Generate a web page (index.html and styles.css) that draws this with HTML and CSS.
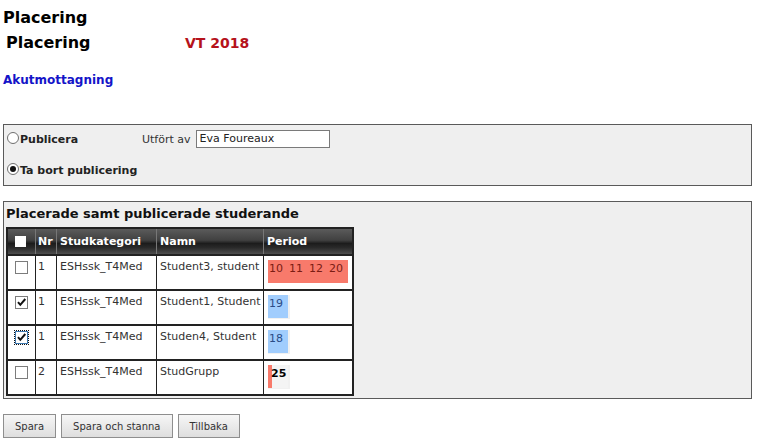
FILE: index.html
```html
<!DOCTYPE html>
<html lang="sv">
<head>
<meta charset="utf-8">
<title>Placering</title>
<link rel="stylesheet" href="styles.css">
</head>
<body>
<div class="page">
  <div class="page-title">Placering</div>
  <div class="head-row">
    <span class="head-title">Placering</span>
    <span class="term">VT 2018</span>
  </div>
  <div class="unit">Akutmottagning</div>

  <div class="panel publish">
    <div class="pub-row">
      <span class="pub-cell">
        <span class="radio"></span><span class="pub-label">Publicera</span>
      </span>
      <span class="by-label">Utfört av</span>
      <span class="text-input">Eva Foureaux</span>
    </div>
    <div class="pub-row second">
      <span class="pub-cell">
        <span class="radio checked"></span><span class="pub-label">Ta bort publicering</span>
      </span>
    </div>
  </div>

  <div class="panel list">
    <div class="list-title">Placerade samt publicerade studerande</div>
    <table class="grid">
      <thead>
        <tr>
          <th class="c-check"><span class="head-box"></span></th>
          <th class="c-nr">Nr</th>
          <th class="c-cat">Studkategori</th>
          <th class="c-name">Namn</th>
          <th class="c-period">Period</th>
        </tr>
      </thead>
      <tbody>
        <tr>
          <td class="c-check"><span class="cbox"></span></td>
          <td class="c-nr">1</td>
          <td class="c-cat">ESHssk_T4Med</td>
          <td class="c-name">Student3, student</td>
          <td class="c-period"><span class="periods"><span class="p red">10</span><span class="p red">11</span><span class="p red">12</span><span class="p red">20</span></span></td>
        </tr>
        <tr>
          <td class="c-check"><span class="cbox checked"><svg viewBox="0 0 11 11" width="11" height="11"><path d="M2 5.2 L4.3 7.8 L9.3 2" fill="none" stroke="#111" stroke-width="2"/></svg></span></td>
          <td class="c-nr">1</td>
          <td class="c-cat">ESHssk_T4Med</td>
          <td class="c-name">Student1, Student</td>
          <td class="c-period"><span class="periods framed"><span class="p blue">19</span></span></td>
        </tr>
        <tr>
          <td class="c-check"><span class="cbox checked focus"><svg viewBox="0 0 11 11" width="11" height="11"><path d="M2 5.2 L4.3 7.8 L9.3 2" fill="none" stroke="#111" stroke-width="2"/></svg></span></td>
          <td class="c-nr">1</td>
          <td class="c-cat">ESHssk_T4Med</td>
          <td class="c-name">Studen4, Student</td>
          <td class="c-period"><span class="periods framed"><span class="p blue">18</span></span></td>
        </tr>
        <tr>
          <td class="c-check"><span class="cbox"></span></td>
          <td class="c-nr">2</td>
          <td class="c-cat">ESHssk_T4Med</td>
          <td class="c-name">StudGrupp</td>
          <td class="c-period"><span class="periods framed"><span class="p partial">25</span></span></td>
        </tr>
      </tbody>
    </table>
  </div>

  <div class="buttons">
    <button class="btn">Spara</button>
    <button class="btn">Spara och stanna</button>
    <button class="btn">Tillbaka</button>
  </div>
</div>
</body>
</html>
```

FILE: styles.css
```css
html, body {
  margin: 0;
  padding: 0;
  background: #ffffff;
}

body {
  font-family: Verdana, "DejaVu Sans", sans-serif;
  font-size: 11px;
  color: #222;
}

.page {
  padding: 0 10px 0 3px;
}

.page-title {
  margin-top: 8px;
  font-size: 16px;
  line-height: 20px;
  font-weight: bold;
  color: #000;
}

.head-row {
  display: flex;
  align-items: baseline;
  margin-top: 5px;
  padding-left: 3px;
  line-height: 20px;
}

.head-title {
  width: 179px;
  font-size: 16px;
  font-weight: bold;
  color: #000;
}

.term {
  font-size: 14px;
  font-weight: bold;
  color: #b5121b;
}

.unit {
  margin-top: 20px;
  font-size: 12px;
  line-height: 15px;
  font-weight: bold;
  color: #1414c8;
}

.panel {
  border: 1px solid #5a5a5a;
  background: #efefef;
}

.publish {
  margin-top: 36px;
  padding: 4px 0 5px 3px;
}

.pub-row {
  display: flex;
  align-items: center;
  height: 20px;
}

.pub-row.second {
  margin-top: 11px;
}

.pub-cell {
  display: flex;
  align-items: center;
  width: 135px;
}

.radio {
  width: 10px;
  height: 10px;
  border: 1px solid #6f6f6f;
  border-radius: 50%;
  background: #fff;
  margin-right: 1px;
  margin-bottom: 3px;
  display: inline-flex;
  align-items: center;
  justify-content: center;
  flex: none;
}

.radio.checked::after {
  content: "";
  width: 6px;
  height: 6px;
  border-radius: 50%;
  background: #111;
}

.pub-label {
  font-weight: bold;
  color: #222;
}

.by-label {
  color: #333;
  margin-right: 5px;
}

.text-input {
  box-sizing: border-box;
  width: 134px;
  height: 18px;
  border: 1px solid #7a7a7a;
  background: #fff;
  padding-left: 3px;
  line-height: 16px;
  color: #222;
}

.list {
  margin-top: 15px;
  padding: 4px 2px 2px 2px;
}

.list-title {
  font-size: 13px;
  line-height: 16px;
  font-weight: bold;
  color: #111;
  margin-bottom: 5px;
}

.grid {
  border-collapse: separate;
  border-spacing: 0;
  border: 2px solid #222;
  background: #fff;
}

.grid th {
  height: 25px;
  padding: 0;
  text-align: left;
  vertical-align: middle;
  color: #fff;
  font-weight: bold;
  font-size: 11px;
  line-height: 13px;
  background: linear-gradient(#5b5b5b 0%, #404040 45%, #1c1c1c 58%, #2a2a2a 75%, #4e4e4e 100%);
  border-left: 1px solid #777;
}

.grid td {
  height: 33px;
  padding: 0;
  vertical-align: top;
  line-height: 13px;
  color: #333;
  border-top: 2px solid #222;
  border-left: 1px solid #222;
}

.grid th:first-child,
.grid td:first-child {
  border-left: none;
}

.c-check { width: 27px; }
.c-nr { width: 20px; }
.c-cat { width: 99px; }
.c-name { width: 106px; }
.c-period { width: 88px; }

.grid th.c-nr, .grid td.c-nr { padding-left: 2px; width: 18px; }
.grid th.c-cat, .grid td.c-cat { padding-left: 3px; width: 96px; }
.grid th.c-name, .grid td.c-name { padding-left: 3px; width: 103px; }
.grid th.c-period { padding-left: 3px; width: 85px; }
.grid td.c-period { padding-left: 4px; width: 84px; }

.grid td.c-nr,
.grid td.c-cat,
.grid td.c-name {
  padding-top: 4px;
  height: 29px;
}

.head-box {
  display: block;
  width: 11px;
  height: 11px;
  background: #fff;
  margin-left: 7px;
}

.cbox {
  display: flex;
  align-items: center;
  justify-content: center;
  box-sizing: border-box;
  width: 13px;
  height: 13px;
  border: 1px solid #7c7c7c;
  background: #fff;
  margin: 5px 0 0 7px;
}

.cbox.focus {
  border-color: #3d78b0;
  outline: 1px dotted #111;
  outline-offset: 0;
}

.grid td.c-period {
  padding-top: 4px;
  height: 29px;
}

.periods {
  display: inline-flex;
}

.periods.framed {
  background: #f1f1f1;
  padding: 0 2px 1px 0;
}

.p {
  width: 19px;
  height: 21px;
  padding: 2px 0 0 1px;
  font-size: 11px;
  line-height: 13px;
}

.p.red {
  background: #f87a6b;
  color: #7a1c14;
}

.p.blue {
  background: #a1cdfd;
  color: #2b4b86;
}

.p.partial {
  background: linear-gradient(to right, #f87a6b 4px, #f4f4f4 4px);
  color: #000;
  font-weight: bold;
  padding-left: 3px;
  width: 17px;
}

.buttons {
  display: flex;
  gap: 5px;
  margin-top: 15px;
}

.btn {
  height: 24px;
  padding: 0 11px;
  border: 1px solid #8e8e8e;
  border-radius: 0;
  background: linear-gradient(#f6f6f6, #dedede);
  font-family: Verdana, "DejaVu Sans", sans-serif;
  font-size: 10px;
  color: #333;
}
```
